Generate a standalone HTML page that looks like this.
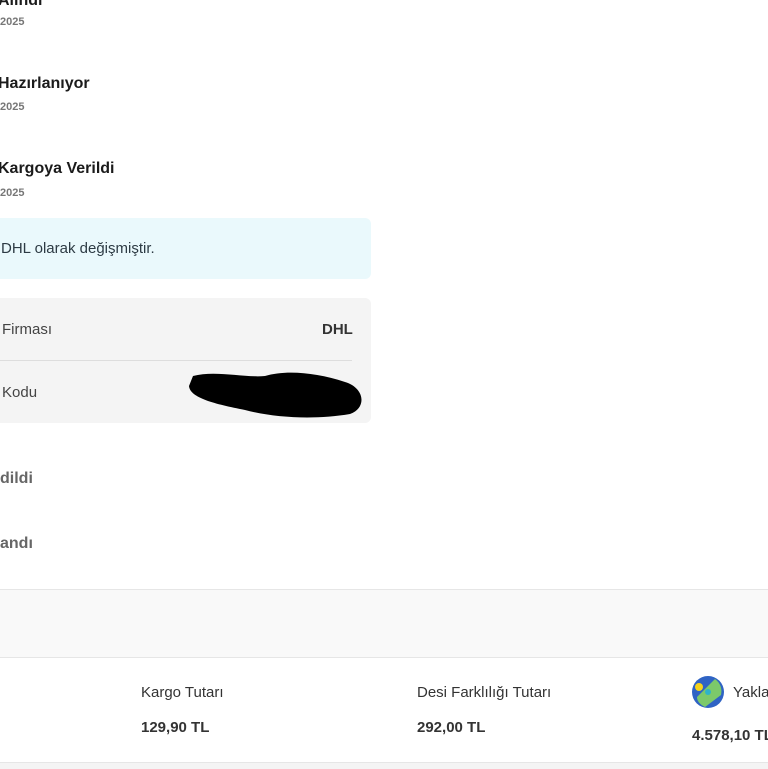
<!DOCTYPE html>
<html><head><meta charset="utf-8"><style>
body{margin:0;width:768px;height:768px;overflow:hidden;background:#fff;font-family:"Liberation Sans",sans-serif;position:relative;color:#222}
.a{position:absolute;white-space:nowrap}
.t{font-weight:bold;font-size:16px;color:#1b1b1b}
.d{font-size:11px;color:#777;font-weight:bold}
</style></head><body>
<div class="a t" style="left:-2px;top:-8px">Alındı</div>
<div class="a d" style="left:0;top:16px">2025</div>
<div class="a t" style="left:-2px;top:75px">Hazırlanıyor</div>
<div class="a d" style="left:0;top:101px">2025</div>
<div class="a t" style="left:-2px;top:160px">Kargoya Verildi</div>
<div class="a d" style="left:0;top:187px">2025</div>
<div class="a" style="left:-10px;top:218px;width:381px;height:61px;background:#eaf9fc;border-radius:6px"></div>
<div class="a" style="left:1px;top:240px;font-size:15px;color:#2d3b44">DHL olarak değişmiştir.</div>
<div class="a" style="left:-10px;top:298px;width:381px;height:125px;background:#f4f4f4;border-radius:6px"></div>
<div class="a" style="left:2px;top:321px;font-size:15px;color:#444">Firması</div>
<div class="a" style="left:322px;top:321px;font-size:15px;font-weight:bold;color:#333">DHL</div>
<div class="a" style="left:0;top:360px;width:352px;height:1px;background:#ddd"></div>
<div class="a" style="left:2px;top:384px;font-size:15px;color:#444">Kodu</div>
<svg class="a" style="left:185px;top:368px" width="185" height="52"><path d="M8 8 C30 2 60 10 80 8 C100 2 130 4 160 14 C180 20 182 40 165 46 C130 52 90 50 60 42 C30 36 5 30 4 18 Z" fill="#000"/></svg>
<div class="a" style="left:0;top:470px;font-size:16px;font-weight:bold;color:#666">dildi</div>
<div class="a" style="left:0;top:535px;font-size:16px;font-weight:bold;color:#666">andı</div>
<div class="a" style="left:0;top:589px;width:768px;height:67px;background:#f9f9f9;border-top:1px solid #e6e6e6;border-bottom:1px solid #e6e6e6"></div>
<div class="a" style="left:141px;top:684px;font-size:15px;color:#333">Kargo Tutarı</div>
<div class="a" style="left:141px;top:719px;font-size:15px;font-weight:bold;color:#333">129,90 TL</div>
<div class="a" style="left:417px;top:684px;font-size:15px;color:#333">Desi Farklılığı Tutarı</div>
<div class="a" style="left:417px;top:719px;font-size:15px;font-weight:bold;color:#333">292,00 TL</div>
<svg class="a" style="left:691px;top:675px" width="34" height="34"><circle cx="17" cy="17" r="16" fill="#2f63c4"/><path d="M6 22 L24 4 Q32 10 30 20 L14 32 Q6 28 6 22Z" fill="#7cc96a"/><circle cx="8" cy="12" r="4" fill="#f5d31c"/><circle cx="17" cy="17" r="3" fill="#2fb3c8"/></svg>
<div class="a" style="left:733px;top:684px;font-size:15px;color:#333">Yaklaşık</div>
<div class="a" style="left:692px;top:727px;font-size:15px;font-weight:bold;color:#333">4.578,10 TL</div>
<div class="a" style="left:0;top:762px;width:768px;height:6px;background:#f4f4f4;border-top:1px solid #e6e6e6"></div>
</body></html>
